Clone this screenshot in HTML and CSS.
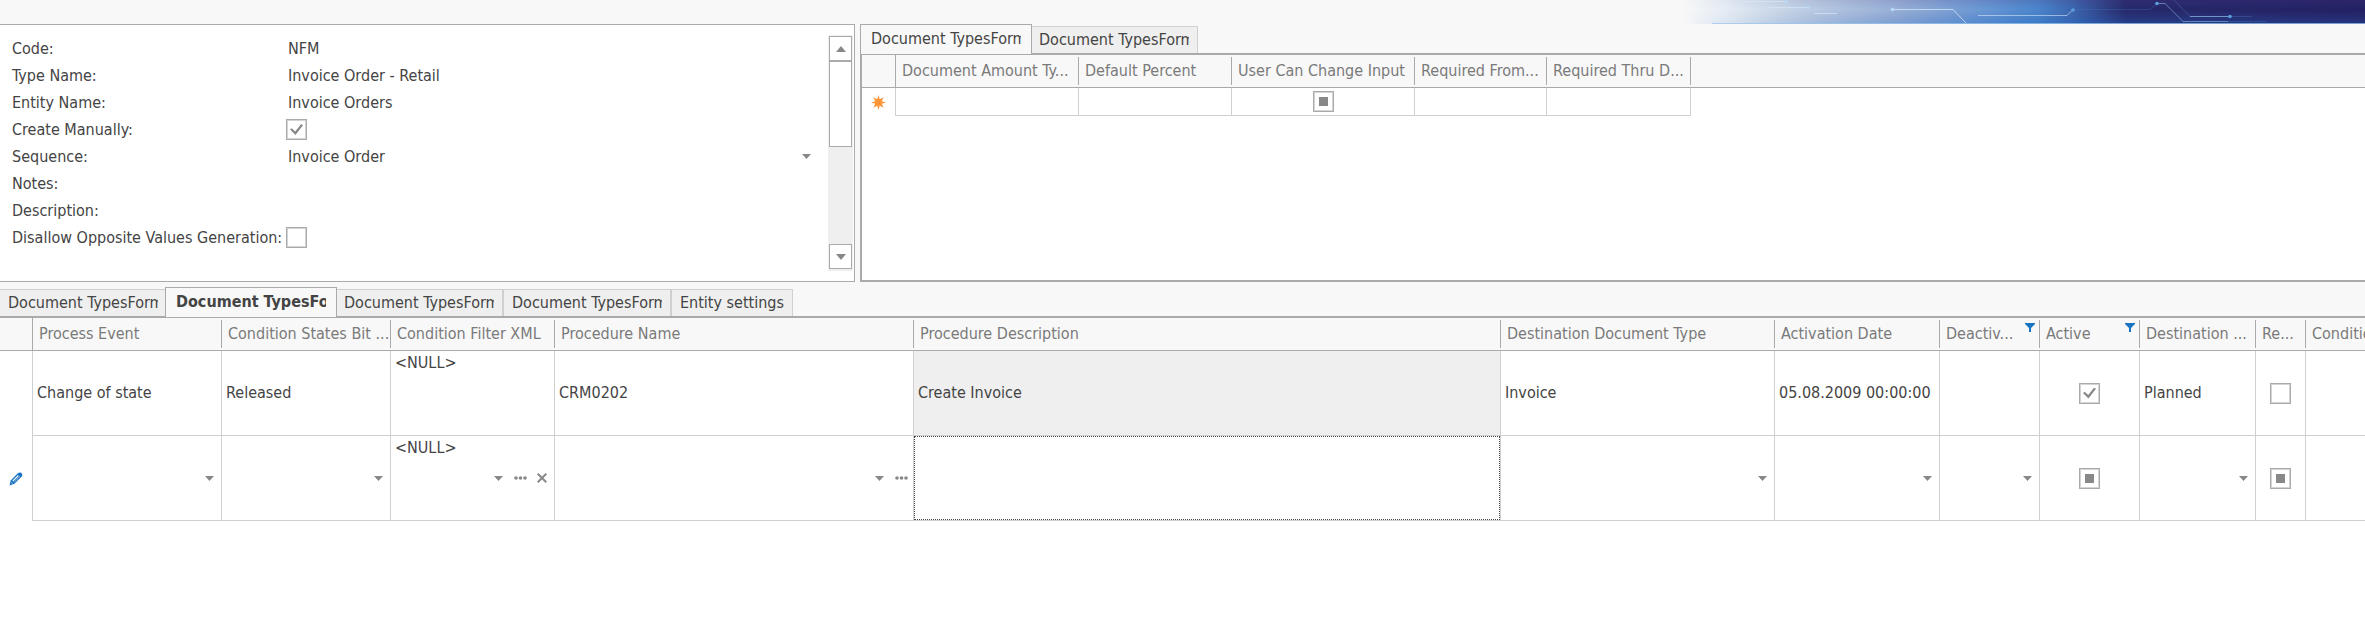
FILE: index.html
```html
<!DOCTYPE html>
<html lang="en">
<head>
<meta charset="utf-8">
<title>Document Types</title>
<link rel="stylesheet" href="styles.css">
</head>
<body>
<div class="app">
  <header class="banner">
    <svg class="banner-art" viewBox="0 0 683 24" preserveAspectRatio="none" aria-hidden="true">
      <defs>
        <linearGradient id="sweep">
          <stop offset="0" stop-color="#f8f8f8"/>
          <stop offset=".06" stop-color="#e6edf4"/>
          <stop offset=".17" stop-color="#c0cfe4"/>
          <stop offset=".32" stop-color="#96aed6"/>
          <stop offset=".45" stop-color="#6696d4"/>
          <stop offset=".52" stop-color="#4a86cc"/>
          <stop offset=".57" stop-color="#3c66b0"/>
          <stop offset=".65" stop-color="#25286a"/>
          <stop offset="1" stop-color="#242064"/>
        </linearGradient>
        <linearGradient id="depth" x2="0" y2="1">
          <stop offset="0" stop-color="#5a3a80" stop-opacity=".22"/>
          <stop offset=".4" stop-color="#4a62a8" stop-opacity="0"/>
          <stop offset="1" stop-color="#1e6ac8" stop-opacity=".4"/>
        </linearGradient>
        <linearGradient id="fade">
          <stop offset="0" stop-color="#000"/>
          <stop offset=".5" stop-color="#fff"/>
          <stop offset="1" stop-color="#bbb"/>
        </linearGradient>
        <mask id="blend"><rect width="683" height="24" fill="url(#fade)"/></mask>
      </defs>
      <rect width="683" height="24" fill="url(#sweep)"/>
      <rect width="683" height="24" fill="url(#depth)" mask="url(#blend)"/>
      <rect x="30" y="23" width="653" height="1" fill="#9cc4ea" opacity=".75"/>
      <g fill="none" stroke="#d4e8f8" stroke-width="1">
        <path d="M60 1.500H104M86 7.500H126M132 13.500H155" opacity=".7"/>
        <path d="M210 9.500H271L284 23" opacity=".75"/>
        <path d="M296 15.500H385L391 9.500" opacity=".6"/>
        <path d="M391 9.500H468L475 3.500M548 16.500H570M546 21.500H584" stroke="#4a78b8" opacity=".35"/>
        <path d="M475 3.500H483L501 21.500H546" stroke="#8ab8e0" opacity=".6"/>
        <path d="M492 0L508 16.500" stroke="#5a88c0" opacity=".4"/>
        <path d="M508 16.500H548" stroke="#8ab8e0" opacity=".75"/>
      </g>
      <g fill="#b8dcf8">
        <circle cx="104" cy="1.500" r="1.500"/><circle cx="126" cy="7.500" r="1.500"/><circle cx="210.500" cy="9.500" r="1.700"/>
      </g>
      <g fill="#5aa0dc">
        <circle cx="391" cy="10" r="1.800"/><circle cx="475" cy="3.500" r="1.800"/><circle cx="548" cy="16.500" r="1.800"/>
      </g>
    </svg>
  </header>

  <main>
    <div class="upper">
      <section class="form-panel">
        <form class="fields">
          <span class="label">Code:</span><span class="value">NFM</span>
          <span class="label">Type Name:</span><span class="value">Invoice Order - Retail</span>
          <span class="label">Entity Name:</span><span class="value">Invoice Orders</span>
          <label class="label" for="manual">Create Manually:</label><input id="manual" class="check" type="checkbox" checked>
          <label class="label" for="sequence">Sequence:</label><select id="sequence" class="picker form-picker"><option>Invoice Order</option></select>
          <label class="label" for="notes">Notes:</label><input id="notes" class="text" type="text">
          <label class="label" for="description">Description:</label><input id="description" class="text" type="text">
          <label class="label" for="disallow">Disallow Opposite Values Generation:</label><input id="disallow" class="check" type="checkbox">
        </form>
        <div class="scrollbar">
          <button class="scroll-button" type="button" aria-label="Scroll up"><svg width="10" height="6" viewBox="0 0 10 6"><path d="M0 6L5 0L10 6Z"/></svg></button>
          <div class="scroll-thumb"></div>
          <button class="scroll-button scroll-down" type="button" aria-label="Scroll down"><svg width="10" height="6" viewBox="0 0 10 6"><path d="M0 0L5 6L10 0Z"/></svg></button>
        </div>
      </section>

      <section class="side">
        <nav class="tabs">
          <button class="tab active" type="button"><span class="clip">Document TypesForm</span></button>
          <button class="tab" type="button"><span class="clip">Document TypesForm</span></button>
        </nav>
        <div class="grid-frame boxed">
          <table class="grid">
            <colgroup><col class="w34"><col class="w183"><col class="w153"><col class="w183"><col class="w132"><col class="w144"><col></colgroup>
            <thead>
              <tr>
                <th class="marker"></th>
                <th><div class="head">Document Amount Ty...</div></th>
                <th><div class="head">Default Percent</div></th>
                <th><div class="head">User Can Change Input</div></th>
                <th><div class="head">Required From...</div></th>
                <th><div class="head">Required Thru D...</div></th>
                <th></th>
              </tr>
            </thead>
            <tbody>
              <tr class="short">
                <td class="marker"><svg class="icon" width="15" height="15" viewBox="0 0 15 15"><path fill="#ff9436" d="M7.500 0L8.700 4.300L12.800 2.200L10.700 6.300L15 7.500L10.700 8.700L12.800 12.800L8.700 10.700L7.500 15L6.300 10.700L2.200 12.800L4.300 8.700L0 7.500L4.300 6.300L2.200 2.200L6.300 4.300Z"/></svg></td>
                <td></td><td></td>
                <td class="center"><input class="check mixed" type="checkbox" aria-label="User Can Change Input"></td>
                <td></td><td></td><td class="rest"></td>
              </tr>
            </tbody>
          </table>
        </div>
      </section>
    </div>

    <section class="lower">
      <nav class="tabs">
        <button class="tab first" type="button"><span class="clip">Document TypesForm</span></button>
        <button class="tab active bold" type="button"><span class="clip">Document TypesForm</span></button>
        <button class="tab" type="button"><span class="clip">Document TypesForm</span></button>
        <button class="tab ruled" type="button"><span class="clip">Document TypesForm</span></button>
        <button class="tab ruled" type="button">Entity settings</button>
      </nav>
      <div class="grid-frame">
        <table class="grid">
          <colgroup><col class="w33"><col class="w189"><col class="w169"><col class="w164"><col class="w359"><col class="w587"><col class="w274"><col class="w165"><col class="w100"><col class="w100"><col class="w116"><col class="w50"><col></colgroup>
          <thead>
            <tr>
              <th class="marker"></th>
              <th><div class="head">Process Event</div></th>
              <th><div class="head">Condition States Bit ...</div></th>
              <th><div class="head">Condition Filter XML</div></th>
              <th><div class="head">Procedure Name</div></th>
              <th><div class="head">Procedure Description</div></th>
              <th><div class="head">Destination Document Type</div></th>
              <th><div class="head">Activation Date</div></th>
              <th><div class="head filtered"><span>Deactiv...</span><svg class="funnel" width="10" height="9" viewBox="0 0 10 9"><path d="M0 0H10V1L6 5V9H4V5L0 1Z"/></svg></div></th>
              <th><div class="head filtered"><span>Active</span><svg class="funnel" width="10" height="9" viewBox="0 0 10 9"><path d="M0 0H10V1L6 5V9H4V5L0 1Z"/></svg></div></th>
              <th><div class="head">Destination ...</div></th>
              <th><div class="head">Re...</div></th>
              <th><div class="head open">Condition</div></th>
            </tr>
          </thead>
          <tbody>
            <tr class="tall">
              <td class="marker"></td>
              <td>Change of state</td>
              <td>Released</td>
              <td class="top">&lt;NULL&gt;</td>
              <td>CRM0202</td>
              <td class="shaded">Create Invoice</td>
              <td>Invoice</td>
              <td>05.08.2009 00:00:00</td>
              <td></td>
              <td class="center"><input class="check" type="checkbox" checked aria-label="Active"></td>
              <td>Planned</td>
              <td class="center"><input class="check" type="checkbox" aria-label="Re..."></td>
              <td class="open"></td>
            </tr>
            <tr class="tall">
              <td class="marker"><svg class="icon" width="14" height="14" viewBox="0 0 14 14"><path fill="#1a74c4" d="M.5 13.500L1.700 8.600L8.800 1.300Q10.400-.1 12.100.8Q14 2.200 12.900 4.300L5.500 11.800Z"/><path stroke="#fff" stroke-width="1.100" fill="none" d="M3.800 9.200L9.400 3.500"/><path stroke="#9cc6ea" stroke-width=".8" fill="none" d="M5.200 10.200L11 4.400M2 10.200L3.900 12"/></svg></td>
              <td class="edit"><select class="picker" aria-label="Process Event"><option></option></select></td>
              <td class="edit"><select class="picker" aria-label="Condition States Bit"><option></option></select></td>
              <td class="edit">
                <div class="editor">
                  <span class="editor-text">&lt;NULL&gt;</span>
                  <button class="tool" type="button" aria-label="Open list"><svg width="9" height="5" viewBox="0 0 9 5"><path d="M0 0H9L4.500 5Z"/></svg></button>
                  <button class="tool" type="button" aria-label="More"><svg width="13" height="4" viewBox="0 0 13 4"><circle cx="2" cy="2" r="1.800"/><circle cx="6.500" cy="2" r="1.800"/><circle cx="11" cy="2" r="1.800"/></svg></button>
                  <button class="tool" type="button" aria-label="Clear"><svg width="10" height="10" viewBox="0 0 10 10"><path class="cross" d="M.7.700L9.300 9.300M9.300.700L.7 9.300"/></svg></button>
                </div>
              </td>
              <td class="edit">
                <div class="editor">
                  <span class="editor-text"></span>
                  <button class="tool" type="button" aria-label="Open list"><svg width="9" height="5" viewBox="0 0 9 5"><path d="M0 0H9L4.500 5Z"/></svg></button>
                  <button class="tool" type="button" aria-label="More"><svg width="13" height="4" viewBox="0 0 13 4"><circle cx="2" cy="2" r="1.800"/><circle cx="6.500" cy="2" r="1.800"/><circle cx="11" cy="2" r="1.800"/></svg></button>
                </div>
              </td>
              <td class="edit"><input class="text focused" type="text" aria-label="Procedure Description"></td>
              <td class="edit"><select class="picker" aria-label="Destination Document Type"><option></option></select></td>
              <td class="edit"><select class="picker" aria-label="Activation Date"><option></option></select></td>
              <td class="edit"><select class="picker" aria-label="Deactivation Date"><option></option></select></td>
              <td class="center"><input class="check mixed" type="checkbox" aria-label="Active"></td>
              <td class="edit"><select class="picker" aria-label="Destination"><option></option></select></td>
              <td class="center"><input class="check mixed" type="checkbox" aria-label="Re..."></td>
              <td class="open"></td>
            </tr>
          </tbody>
        </table>
      </div>
    </section>
  </main>
</div>
</body>
</html>
```
FILE: styles.css
```css
* { box-sizing: border-box; }

body {
  margin: 0;
  background: #f8f8f8;
  color: #444;
  font: 16px/20px "DejaVu Sans Condensed", "DejaVu Sans", sans-serif;
}

button, input, select {
  font: inherit;
  color: inherit;
  margin: 0;
  padding: 0;
  border: 0;
  border-radius: 0;
  background: none;
}

svg { display: block; }

.app {
  display: flex;
  flex-direction: column;
  min-height: 100vh;
  overflow: hidden;
}

main {
  flex: 1;
  display: flex;
  flex-direction: column;
  gap: 5px;
}

.banner {
  height: 24px;
  display: flex;
  justify-content: flex-end;
}

.banner-art { width: 683px; height: 24px; }

/* Upper area: record form and amount grid */

.upper {
  display: flex;
  gap: 5px;
  height: 258px;
}

.form-panel {
  flex: 0 1 855px;
  display: flex;
  padding: 10px 1px 10px 12px;
  border: 1px solid #aaa;
  border-left: 0;
  background: #fff;
}

.fields {
  flex: 1;
  display: grid;
  grid-template-columns: 274px 1fr;
  grid-auto-rows: 27px;
  align-items: center;
  align-content: start;
  padding-right: 10px;
}

.label, .value { white-space: nowrap; }
.value { padding-left: 2px; }

.text { width: 100%; height: 100%; outline: 0; }

.check {
  appearance: none;
  display: inline-grid;
  place-content: center;
  width: 21px;
  height: 21px;
  border: 1px solid #aaa;
  box-shadow: inset 0 0 0 1px #d4d4d4;
  background: #fff;
  vertical-align: middle;
}

.check:checked::after {
  content: "";
  width: 13px;
  height: 11px;
  background: #888;
  clip-path: polygon(0 50%, 13% 38%, 40% 68%, 86% 0, 100% 12%, 42% 100%);
}

.mixed::after {
  content: "";
  width: 9px;
  height: 9px;
  background: #888;
}

.picker {
  appearance: none;
  display: block;
  width: 100%;
  height: 84px;
  background: url("data:image/svg+xml,%3Csvg xmlns='http://www.w3.org/2000/svg' width='9' height='5'%3E%3Cpath fill='%23888' d='M0 0H9L4.500 5Z'/%3E%3C/svg%3E") no-repeat right 7px center;
}

.form-picker { height: 27px; padding-left: 2px; }

.scrollbar {
  width: 25px;
  padding: 1px 1px 2px;
  display: flex;
  flex-direction: column;
  background: #efefef;
}

.scroll-button {
  display: grid;
  place-items: center;
  height: 25px;
  border: 1px solid #aaa;
  background: #fff;
  fill: #888;
}

.scroll-down { margin-top: auto; }

.scroll-thumb {
  height: 86px;
  border: 1px solid #aaa;
  background: #fff;
}

.side {
  flex: 1;
  min-width: 0;
  display: flex;
  flex-direction: column;
}

/* Tabs */

.tabs {
  display: flex;
  align-items: flex-end;
  height: 29px;
}

.tab {
  height: 27px;
  padding: 0 8px 0 7px;
  border: 1px solid #d0d0d0;
  border-width: 1px 1px 0 0;
  background: #efefef;
  white-space: nowrap;
}

.tab.first { padding: 0 7px 0 8px; border-right: 0; }
.tab.ruled { padding-left: 8px; border-left-width: 1px; }

.tab.active {
  position: relative;
  height: 30px;
  margin-bottom: -1px;
  padding: 0 10px 1px;
  border: 1px solid #aaa;
  border-bottom: 0;
  background: #f8f8f8;
}

.clip {
  display: block;
  width: 150px;
  overflow: hidden;
  text-align: left;
}

.bold { font-weight: 700; }

/* Data grids */

.lower {
  flex: 1;
  display: flex;
  flex-direction: column;
}

.grid-frame {
  flex: 1;
  border-top: 2px solid #aaa;
  background: #fff;
  overflow: hidden;
}

.boxed { border: 2px solid #aaa; border-right: 0; }

.grid {
  width: 100%;
  table-layout: fixed;
  border-spacing: 0;
}

.w33 { width: 33px; }
.w34 { width: 34px; }
.w50 { width: 50px; }
.w100 { width: 100px; }
.w116 { width: 116px; }
.w132 { width: 132px; }
.w144 { width: 144px; }
.w153 { width: 153px; }
.w164 { width: 164px; }
.w165 { width: 165px; }
.w169 { width: 169px; }
.w183 { width: 183px; }
.w189 { width: 189px; }
.w274 { width: 274px; }
.w359 { width: 359px; }
.w587 { width: 587px; }

th {
  height: 33px;
  padding: 0;
  border-bottom: 1px solid #aaa;
  background: #f8f8f8;
  color: #7a7a7a;
  font-weight: 400;
  text-align: left;
}

th.marker { border-right: 1px solid #aaa; }

.head {
  height: 28px;
  padding: 4px 0 4px 6px;
  border-right: 1px solid #aaa;
  overflow: hidden;
  white-space: nowrap;
}

.filtered {
  display: flex;
  justify-content: space-between;
  padding-right: 4px;
}

.funnel { fill: #1a74c4; }

.filtered .funnel { margin-top: -1px; }

td {
  padding: 0 4px;
  border: 1px solid #d0d0d0;
  border-width: 0 1px 1px 0;
  white-space: nowrap;
}

.short td { height: 28px; }
.tall td { height: 85px; }

td.marker { border-bottom: 0; padding: 0; }
td.rest { border: 0; }
.open { border-right: 0; }

.icon { margin: 0 auto; }

.center { text-align: center; padding: 0; }
.shaded { background: #efefef; }
.top { vertical-align: top; padding-top: 2px; }
.edit { padding: 0; }

.editor {
  display: flex;
  height: 84px;
  padding-right: 1px;
}

.editor-text { flex: 1; padding: 2px 4px; }

.tool {
  width: 22px;
  display: grid;
  place-items: center;
  fill: #888;
}

.cross { stroke: #888; stroke-width: 2; }

.focused {
  display: block;
  height: 84px;
  border: 1px dotted #444;
}
```
